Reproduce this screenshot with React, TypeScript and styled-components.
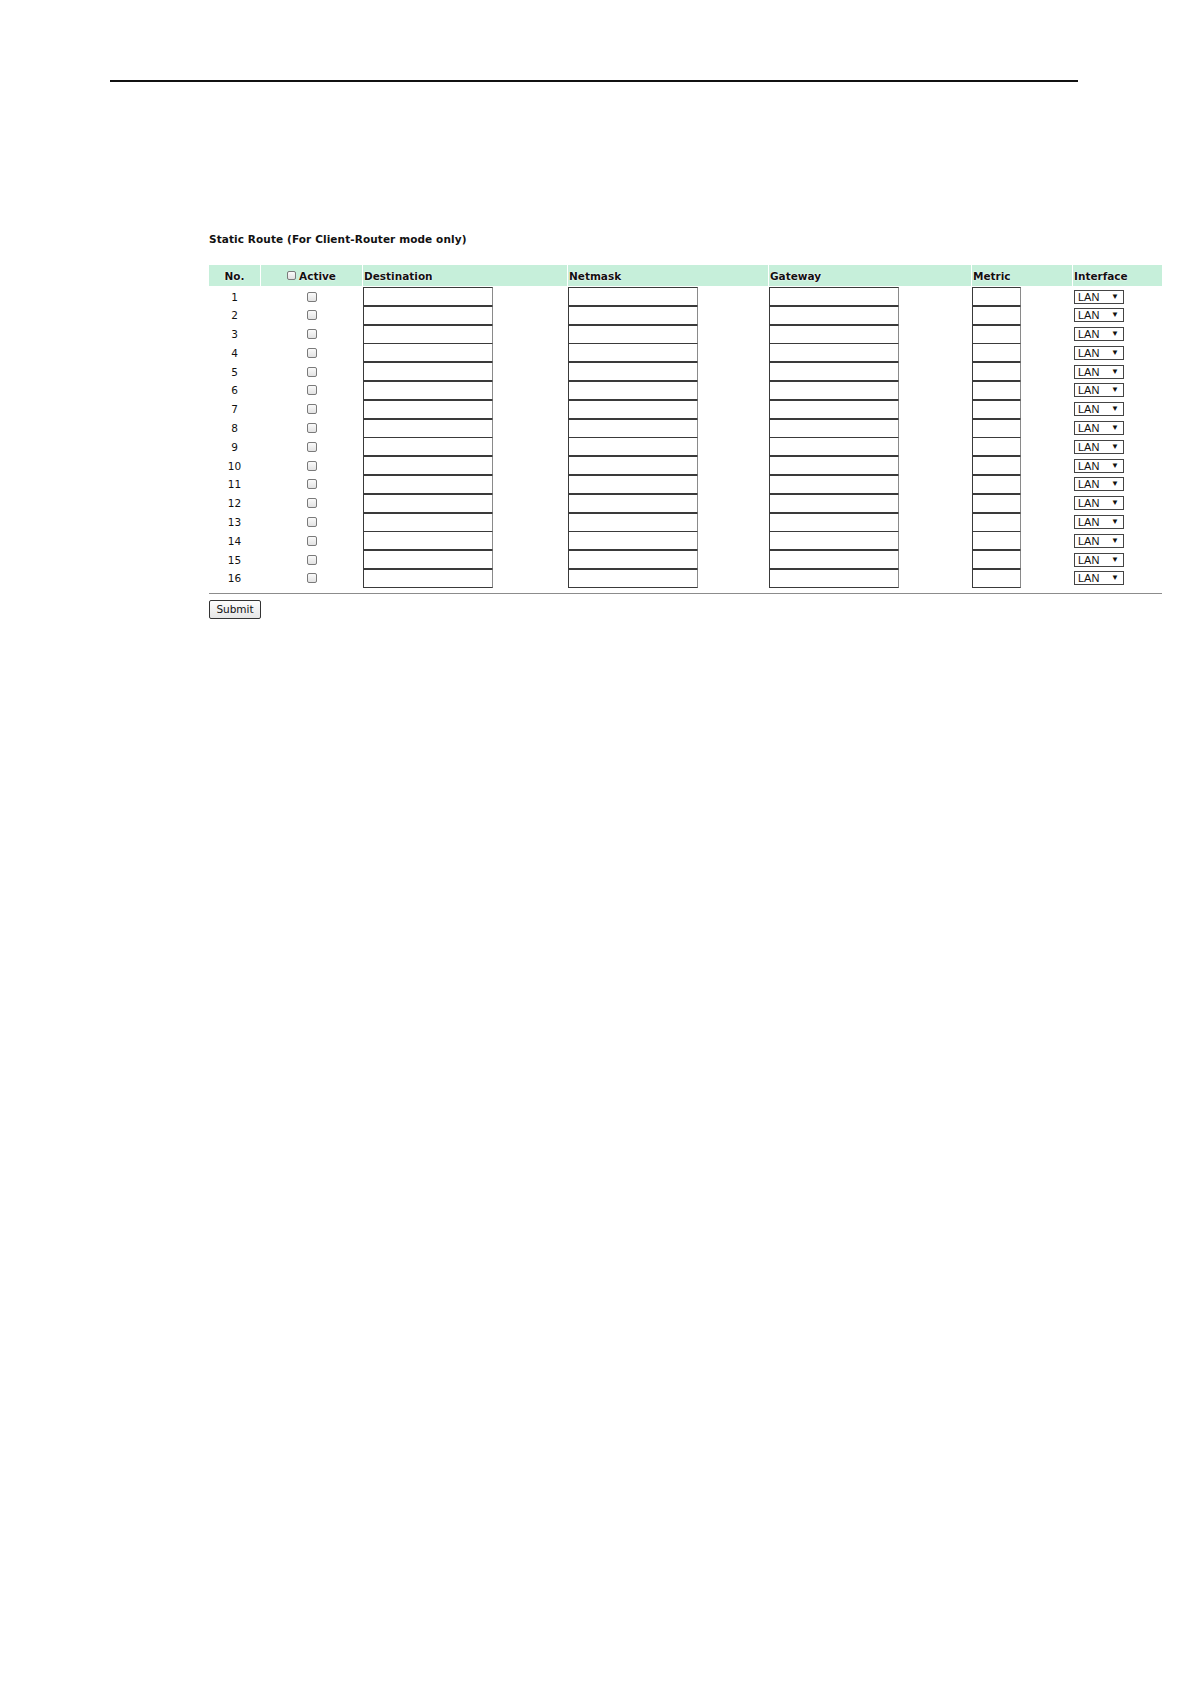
import React from "react";
import styled, { createGlobalStyle } from "styled-components";

const GlobalStyle = createGlobalStyle`
  html, body {
    margin: 0;
    padding: 0;
    background: #fff;
  }
  body {
    font-family: "DejaVu Sans", Verdana, sans-serif;
    color: #000;
  }
`;

const Page = styled.div`
  width: 1191px;
  min-height: 1684px;
  padding-top: 80px;
  box-sizing: border-box;
`;

const TopRule = styled.hr`
  margin: 0 0 0 110px;
  width: 968px;
  border: 0;
  border-top: 2px solid #111;
  height: 0;
`;

const Section = styled.section`
  margin: 151px 0 0 209px;
  width: 953px;
`;

const Title = styled.div`
  font-size: 10.5px;
  font-weight: bold;
  color: #111;
  line-height: 13px;
  margin-bottom: 19px;
  letter-spacing: 0.1px;
`;

const COLS = "51px 102px 205px 201px 203px 101px 90px";

const HeaderRow = styled.div`
  display: grid;
  grid-template-columns: ${COLS};
  height: 21px;
  background: #c6efda;
`;

const HeadCell = styled.div<{ $center?: boolean }>`
  display: flex;
  align-items: center;
  justify-content: ${(p) => (p.$center ? "center" : "flex-start")};
  gap: 3px;
  padding-left: ${(p) => (p.$center ? "0" : "1px")};
  font-size: 10.5px;
  font-weight: bold;
  color: #111;
  text-shadow: 0 0 2px #fff, 0 0 1px #fff;
  & + & {
    border-left: 1px solid #fff;
  }
`;

const Body = styled.div`
  padding-top: 1px;
`;

const Row = styled.div`
  display: grid;
  grid-template-columns: ${COLS};
  height: 18.8px;
  align-items: center;
`;

const NumCell = styled.div`
  text-align: center;
  font-size: 10.5px;
  color: #111;
`;

const Cell = styled.div<{ $center?: boolean }>`
  display: flex;
  align-items: center;
  justify-content: ${(p) => (p.$center ? "center" : "flex-start")};
  height: 100%;
  padding-left: 1px;
`;

const Check = styled.input.attrs({ type: "checkbox" })<{ $small?: boolean }>`
  appearance: none;
  -webkit-appearance: none;
  margin: 0;
  width: ${(p) => (p.$small ? "9px" : "10px")};
  height: ${(p) => (p.$small ? "9px" : "10px")};
  border: 1px solid #7a7a7a;
  border-radius: 2px;
  background: linear-gradient(#fafafa, #e2e2e2);
  box-sizing: border-box;
`;

const TextBox = styled.input.attrs({ type: "text" })<{ $w: number }>`
  width: ${(p) => p.$w}px;
  height: 19px;
  margin: 0;
  padding: 0 2px;
  box-sizing: border-box;
  border: 1px solid #3a3a3a;
  border-right-color: #8a8a8a;
  background: #fff;
  font-size: 11px;
  outline: none;
`;

const SelectBox = styled.div`
  display: flex;
  align-items: center;
  justify-content: space-between;
  width: 50px;
  height: 14px;
  margin-left: 1px;
  padding: 0 4px 0 3px;
  box-sizing: border-box;
  border: 1px solid #444;
  font-family: "Liberation Sans", Arial, sans-serif;
  font-size: 11px;
  line-height: 12px;
  color: #111;
  background: #fff;
`;

const Arrow = styled.span`
  font-size: 8px;
  line-height: 8px;
`;

const BottomRule = styled.div`
  height: 0;
  border-top: 1px solid #8c8c8c;
  margin-top: 5px;
`;

const SubmitButton = styled.button`
  margin-top: 6px;
  width: 52px;
  height: 19px;
  padding: 0;
  box-sizing: border-box;
  border: 1px solid #333;
  border-radius: 2px;
  background: linear-gradient(#fdfdfd, #e6e6e6);
  font-family: "DejaVu Sans", Verdana, sans-serif;
  font-size: 10.5px;
  color: #111;
`;

const rows = Array.from({ length: 16 }, (_, i) => i + 1);

export default function App() {
  return (
    <Page>
      <GlobalStyle />
      <TopRule />
      <Section>
        <Title>Static Route (For Client-Router mode only)</Title>
        <HeaderRow>
          <HeadCell $center>No.</HeadCell>
          <HeadCell $center>
            <Check $small />
            Active
          </HeadCell>
          <HeadCell>Destination</HeadCell>
          <HeadCell>Netmask</HeadCell>
          <HeadCell>Gateway</HeadCell>
          <HeadCell>Metric</HeadCell>
          <HeadCell>Interface</HeadCell>
        </HeaderRow>
        <Body>
          {rows.map((n) => (
            <Row key={n}>
              <NumCell>{n}</NumCell>
              <Cell $center>
                <Check />
              </Cell>
              <Cell>
                <TextBox $w={130} />
              </Cell>
              <Cell>
                <TextBox $w={130} />
              </Cell>
              <Cell>
                <TextBox $w={130} />
              </Cell>
              <Cell>
                <TextBox $w={49} />
              </Cell>
              <Cell>
                <SelectBox>
                  LAN
                  <Arrow>▼</Arrow>
                </SelectBox>
              </Cell>
            </Row>
          ))}
        </Body>
        <BottomRule />
        <SubmitButton type="button">Submit</SubmitButton>
      </Section>
    </Page>
  );
}
